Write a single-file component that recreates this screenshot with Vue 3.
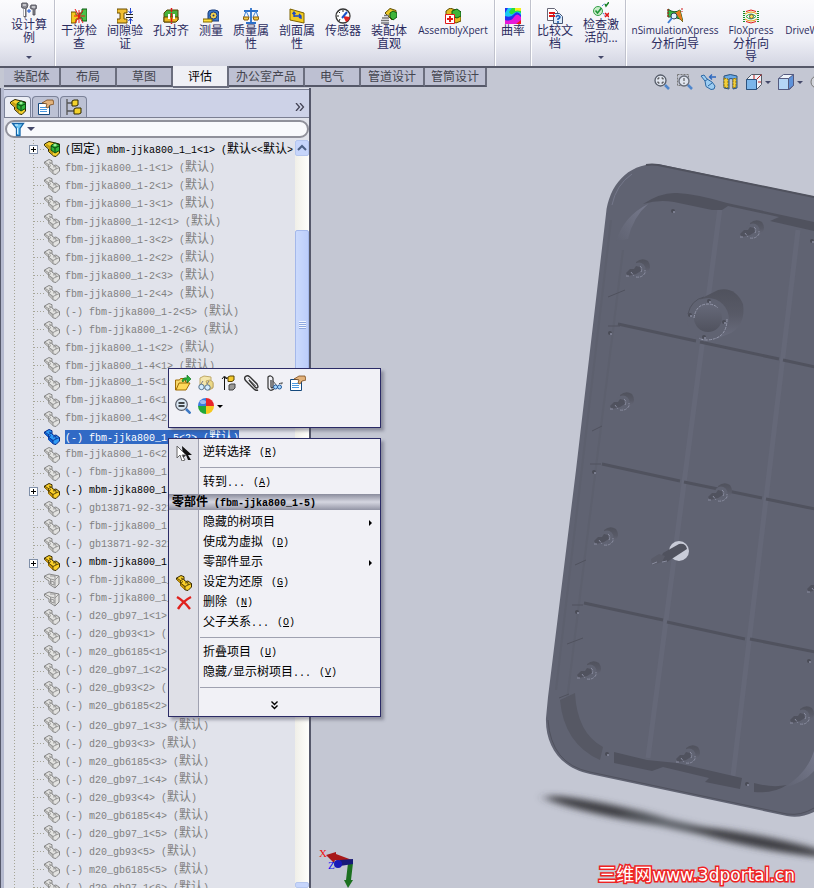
<template>
    <div class="app">
        <!-- 图标定义 -->
        <svg class="defs" aria-hidden="true">
            <symbol id="i-study" viewBox="0 0 16 16">
                <path d="M1 1h5l1 2-1 3H5v9H3V6H1L0 3zM10 3h5l1 2-1 2h-1v6h-2V7h-2L9 5z" fill="#8b8b94" stroke="#45454f" stroke-width=".8" />
                <path d="M2 3h3M3.500 7v7M11 5h3" stroke="#fff" fill="none" />
                <path d="M6 9h4M8 7v4" stroke="#1450d0" />
            </symbol>
            <symbol id="i-interfere" viewBox="0 0 16 16">
                <path d="M0 4h5v3h3v4H5v4H0z" fill="#f2c81e" stroke="#6b5500" />
                <path d="M16 1h-5v4H8v5h3v3h5z" fill="#4cc04a" stroke="#0d5c12" />
                <path d="M4 1l8 14M12 2L4 15M3 8h11M8 2v13" stroke="#f01a1a" />
            </symbol>
            <symbol id="i-clearance" viewBox="0 0 16 16">
                <path d="M0 1h10v4H7v6h3v4H0v-4h3V5H0z" fill="#f0bf34" stroke="#6b4c00" />
                <path d="M9 6.500h7M9 9.500h7" stroke="#222" />
                <path d="M13.500 0v5M13.500 16v-5M11.500 3l2 2.500 2-2.500M11.500 13l2-2.500 2 2.500" stroke="#1b3fd0" fill="none" />
            </symbol>
            <symbol id="i-hole" viewBox="0 0 16 16">
                <path d="M1 5l3-3h11v10l-3 2H1z" fill="#45b13c" stroke="#5a4500" />
                <path d="M1 9h14v3l-2 2H1z" fill="#e8b622" stroke="#5a4500" />
                <path d="M5 6h2v5H5zM10 6h2v5h-2z" fill="#fff" />
                <path d="M8.500 0v16" stroke="#e01818" stroke-width="1.500" stroke-dasharray="4 1" />
            </symbol>
            <symbol id="i-measure" viewBox="0 0 16 16">
                <path d="M5 13V5q0-3 4-3h3q4 0 4 4v7z" fill="#3b78c8" stroke="#173a78" />
                <circle cx="10.500" cy="7.500" r="3.500" fill="#f3d24c" stroke="#173a78" />
                <circle cx="10.500" cy="7.500" r="1" fill="#173a78" />
                <path d="M0 11h9v3H0z" fill="#ffdf3b" stroke="#7d6200" />
            </symbol>
            <symbol id="i-mass" viewBox="0 0 16 16">
                <path d="M8 0v14M1 3h14M3 15h10" stroke="#2b6fc9" stroke-width="1.800" />
                <path d="M3 3l-2 6M3 3l3 6M13 3l-3 6M13 3l2 6" stroke="#3f82d5" fill="none" />
                <path d="M0 9h6l-1 3H1zM10 9h6l-1 3h-4z" fill="#f0cb4b" stroke="#8a5b08" />
            </symbol>
            <symbol id="i-section" viewBox="0 0 16 16">
                <path d="M1 1l14 4v10L1 12z" fill="#f2cb22" stroke="#7d6200" />
                <path d="M5 9V4M3.500 6L5 4l1.500 2M5 8h7M10 6l2 2-2 2M12 8v3" stroke="#1746c8" fill="none" stroke-width="1.300" />
            </symbol>
            <symbol id="i-sensor" viewBox="0 0 16 16">
                <circle cx="8" cy="8" r="7" fill="#fff" stroke="#333" stroke-width="1.300" />
                <path d="M8 8l7 1q-1 4-4 5z" fill="#e32222" />
                <path d="M8 2v2M2 8h2M3.500 3.500L5 5M4 13l1-2" stroke="#222" />
                <path d="M7 10l5-6" stroke="#1c52c8" stroke-width="2" />
            </symbol>
            <symbol id="i-visual" viewBox="0 0 16 16">
                <path d="M4 5l5-4.500 6 2v5l-4 4.500z" fill="#ecc626" stroke="#5a4b00" />
                <path d="M9 5l3-2 4 2v4l-4 3-3-3z" fill="#3fb43a" stroke="#0c5a12" />
                <path d="M3 7.500h5M1 10h7M0 12.500h8M0 15h8" stroke="#777" stroke-width="1.400" />
            </symbol>
            <symbol id="i-expert" viewBox="0 0 16 16">
                <path d="M1 3l4-3 11 4v9l-5 2-10-5z" fill="#e2bb22" stroke="#5a4b00" />
                <path d="M7 3l5-2 4 3v4l-4 2-5-2z" fill="#3fb43a" stroke="#0c5a12" />
                <path d="M.500 6.500h9v9h-9z" fill="#fff" stroke="#e01818" />
                <path d="M5 8v6M2 11h6" stroke="#e01818" stroke-width="2" />
            </symbol>
            <symbol id="i-curve" viewBox="0 0 16 16">
                <path d="M0 0h16v16H0z" fill="#e619d8" />
                <path d="M0 0h16v9Q12 4 9 9T0 12z" fill="#2330f0" />
                <path d="M3 0h13v7Q12 2 9 6T0 8V5z" fill="#18c8f0" />
                <path d="M7 0h9v5q-4-3-7 0T4 4z" fill="#26e03a" />
                <path d="M10 0h6v3q-4-1-6 0z" fill="#f3ef20" />
                <path d="M16 12v4h-5z" fill="#f01818" />
            </symbol>
            <symbol id="i-compare" viewBox="0 0 16 16">
                <path d="M.500.500h7l3 3v9H.500z" fill="#fff" stroke="#667" />
                <path d="M6.500 5.500h6l3 3v7h-9z" fill="#dcebfa" stroke="#457" />
                <path d="M2 5h6M2 8h6" stroke="#e01818" stroke-width="2" />
                <path d="M9 9q2-3 4 0 0 1-2 2v1M11 13v2" stroke="#1c5fb8" stroke-width="1.600" fill="none" />
            </symbol>
            <symbol id="i-check" viewBox="0 0 16 16">
                <circle cx="5" cy="9" r="4.500" fill="#c8ecc8" stroke="#35a04a" />
                <path d="M2.500 8.500l2 2.500 4-5" stroke="#1e9638" stroke-width="1.600" fill="none" />
                <path d="M9 4l3-3M10 11l2 3" stroke="#1c52c8" stroke-dasharray="1 1" />
                <path d="M12 2l1 2 3-4" stroke="#168024" fill="none" stroke-width="1.500" />
                <path d="M12 11l4 4M16 11l-4 4" stroke="#e01818" stroke-width="1.600" />
            </symbol>
            <symbol id="i-simulation" viewBox="0 0 16 16">
                <path d="M1 1q6 5 12 1l3 12-3-3Q6 8 1 9z" fill="#35b540" stroke="#185c20" />
                <path d="M8 5l5-3 3 12-3-3z" fill="#e87a1a" />
                <path d="M15 0v4M1 1v9" stroke="#d01818" stroke-dasharray="2 1" />
                <circle cx="7" cy="8" r="3" fill="#dff0ff" stroke="#345" />
                <path d="M5 10l-4 5" stroke="#3d7fd6" stroke-width="2" />
            </symbol>
            <symbol id="i-flow" viewBox="0 0 16 16">
                <path d="M3 3.500q5-3 10 0M3 13.500q5 3 10 0" stroke="#e01818" fill="none" />
                <path d="M2 6q6-4 12 0M2 11q6 4 12 0" stroke="#e8a410" fill="none" />
                <path d="M3 8.500q5-5 10 0-5 5-10 0" stroke="#2fae3a" fill="none" />
                <path d="M1 3v11M15 3v11" stroke="#168c2a" stroke-dasharray="1 1" stroke-width="2" />
                <circle cx="8.500" cy="8.500" r="2" fill="#ffe14a" stroke="#555" />
            </symbol>

            <symbol id="i-part" viewBox="0 0 16 16">
                <path d="M.500 3L5 .500l3 1.200V5l2 1.500L12 6l3.500 2.500V12L12 15.500 9.500 15 4.500 10.500V8L.500 4.500z" fill="var(--face)" stroke="var(--line)" />
                <path d="M4.500 8l4.500 3v4l-4.500-4zM1 4l3 2v2L1 5z" fill="var(--side)" />
                <path d="M.500 3l4 2.500L8 4M4.500 5.500V8L9 11.500V15M9 11.500L12 10l3.500-1.500M12 10V7.500L9 8M4.500 8L7 6.500M5 3l2 1" stroke="var(--line)" fill="none" stroke-width=".8" />
            </symbol>
            <symbol id="i-block" viewBox="0 0 16 16">
                <path d="M.500 3L5 1l10 2v8l-4 4-6-4V8L.500 5z" fill="var(--face)" stroke="var(--line)" />
                <path d="M.500 3l6 3v5M6.500 6L11 7v8M11 7l4-4M6 3h5v3M7 8l3 1v3l-3-1z" stroke="var(--line)" fill="none" stroke-width=".8" />
            </symbol>
            <symbol id="i-assembly" viewBox="0 0 16 16">
                <path d="M.500 3L5 .500 15.500 3v9L12 15.500 9.500 15 4.500 10.500V8L.500 4.500z" fill="#f6d22e" stroke="#2d2600" />
                <path d="M1 4l4 3v3l4 4v-3L6 8V5L3 3z" fill="#c39a12" />
                <path d="M7 4.500L11 2l4.500 2v5.500L11 12 7 9z" fill="#2fb63a" stroke="#0b4610" />
                <path d="M7 5l4 2 4-2M11 7v4" stroke="#0b4610" fill="none" />
                <path d="M9 4l2-1.500L13 4l-2 1.500z" fill="#a4f09a" />
            </symbol>
            <symbol id="i-property" viewBox="0 0 16 16">
                <path d="M.500 4.500h11v11H.500z" fill="#fff" stroke="#14487c" />
                <path d="M2 8.500h7M2 10.500h7M2 12.500h7" stroke="#4a98e0" />
                <path d="M4 4l5-3 6 0 1 4-4 1-2 3-2-1 1-3z" fill="#e3b37c" stroke="#7a4a1a" stroke-width=".8" />
            </symbol>
            <symbol id="i-config" viewBox="0 0 16 16">
                <path d="M1 0v16M1 4h6M1 12h7" stroke="#555" stroke-width="1.300" />
                <path d="M6 2l2-1h4v5l-2 1H6zM8 10l2-1h5v5l-2 1H8z" fill="#f4d22c" stroke="#2d2600" />
            </symbol>
            <symbol id="i-funnel" viewBox="0 0 16 16">
                <path d="M2.500 2.500h11L10 7.500v7H6.500v-7z" fill="#6cc4f2" stroke="#1565a8" stroke-width="1.300" />
                <path d="M5 4h3M7.500 7v6" stroke="#d8f2ff" />
            </symbol>

            <symbol id="i-open" viewBox="0 0 16 16">
                <path d="M.500 15V5h4l1-1.500h5V7h3z" fill="#f7d76a" stroke="#a06c05" />
                <path d="M1 15l3-7h11l-4 7z" fill="#ffd95a" stroke="#a06c05" />
                <path d="M7 6q1-4 5-3V0l4 4-4 4V5Q9 4 8 7z" fill="#28b03a" stroke="#0e6a1a" stroke-width=".6" />
            </symbol>
            <symbol id="i-hide" viewBox="0 0 16 16">
                <path d="M2 3l4-2 7 1v4l2 2v5l-4 2-9-4z" fill="#f3e6ad" stroke="#bfa968" />
                <path d="M8 6l4-1 3 2v5l-4 3z" fill="#ecd987" stroke="#bfa968" />
                <path d="M3 9l2-3M9 9l2-3" stroke="#778" />
                <circle cx="3.500" cy="12" r="2.700" fill="#d3ecff" stroke="#55708a" />
                <circle cx="9.500" cy="12.500" r="2.700" fill="#d3ecff" stroke="#55708a" />
            </symbol>
            <symbol id="i-rollback" viewBox="0 0 16 16">
                <path d="M3.500 15V2M1 4l2.500-3L6 4M3 3h5" stroke="#111" fill="none" />
                <path d="M7 2l2-1h4v4l-2 1.500H7z" fill="#f4ca2c" stroke="#5a4500" />
                <path d="M8 10l2-1h4v4l-2 2H8z" fill="#9a9a98" stroke="#444" />
            </symbol>
            <symbol id="i-clip" viewBox="0 0 16 16">
                <path d="M5 5l6 7q2 2 3 0 0-1-1-3L6 2Q3-.500 1 2q-1 2 1 4l8 8q2 2 4 1" stroke="#333" fill="none" stroke-width="1.400" />
                <path d="M4 3l8 8" stroke="#888" />
            </symbol>
            <symbol id="i-mate" viewBox="0 0 16 16">
                <path d="M4 5v7q1 2 2 0V3Q4-.500 1 2v11q2 4 6 1" stroke="#333" fill="none" stroke-width="1.200" />
                <path d="M6 6l4 5M12 9l1-1 2 1v-2" stroke="#555" fill="none" />
                <circle cx="8.500" cy="12" r="2" fill="#a8d8ff" stroke="#245a9a" />
                <circle cx="12.500" cy="12" r="2" fill="#a8d8ff" stroke="#245a9a" />
            </symbol>
            <symbol id="i-zoomsel" viewBox="0 0 16 16">
                <circle cx="6.500" cy="6.500" r="5.800" fill="#dbe9f5" stroke="#555a66" stroke-width="1.200" />
                <path d="M3.500 5h6M3.500 8h6" stroke="#111" stroke-width="1.400" />
                <path d="M11 11l4.500 4.500" stroke="#3d78c4" stroke-width="2.500" />
            </symbol>
            <symbol id="i-ball" viewBox="0 0 16 16">
                <path d="M8 8V0a8 8 0 0 0-8 8z" fill="#3c7be0" />
                <path d="M8 8h8a8 8 0 0 0-8-8z" fill="#e8252a" />
                <path d="M8 8v8a8 8 0 0 0 8-8z" fill="#f6c81e" />
                <path d="M8 8H0a8 8 0 0 0 8 8z" fill="#22a838" />
                <ellipse cx="5" cy="4" rx="3" ry="2" fill="#fff" opacity=".5" />
            </symbol>
            <symbol id="i-invert" viewBox="0 0 16 16">
                <path d="M6 1l10 9h-4l3 5h-3l-2-5-3 3z" fill="#111" />
                <path d="M1 1v12l3-3 2 6 3-1-3-5h4z" fill="#fff" stroke="#666" />
            </symbol>
            <symbol id="i-delete" viewBox="0 0 16 16">
                <path d="M1 2q7 4 13 12M15 2Q7 6 2 14" stroke="#e0201c" stroke-width="2.400" fill="none" />
            </symbol>

            <symbol id="i-fit" viewBox="0 0 16 16">
                <circle cx="6.500" cy="6.500" r="5.500" fill="#dfe4ee" stroke="#555b68" stroke-width="1.300" />
                <path d="M4 5.500V4h1.500M7.500 4H9v1.500M9 7.500V9H7.500M5.500 9H4V7.500" stroke="#333" fill="none" />
                <path d="M11 11l4 4" stroke="#4e86cc" stroke-width="2.500" />
            </symbol>
            <symbol id="i-area" viewBox="0 0 16 16">
                <path d="M.500.500h11v11H.500z" fill="none" stroke="#777" stroke-dasharray="2 1" />
                <circle cx="7" cy="7" r="5" fill="#dfe4ee" stroke="#666c78" stroke-width="1.300" />
                <path d="M7 4v3M7 8.500V10" stroke="#444" />
                <path d="M11 11l4 4" stroke="#4e86cc" stroke-width="2.500" />
            </symbol>
            <symbol id="i-previous" viewBox="0 0 16 16">
                <path d="M1 2l3-1 3 4 5 3 3 4-1 3-3 .500-5-3L5 7z" fill="#9dcdf2" stroke="#2c68a4" />
                <path d="M5 7l3-2M8 12l4-3" stroke="#2c68a4" />
                <path d="M16 3h-6M12 .500L9.500 3 12 5.500" stroke="#2c68c0" fill="none" stroke-width="1.300" />
            </symbol>
            <symbol id="i-cut" viewBox="0 0 16 16">
                <path d="M1 2q6-3 13 0v12l-4 1V5Q8 4 6 5v10l-5-1z" fill="#68a8e4" stroke="#2b527e" />
                <path d="M1 4l4 1v9l-4-1zM10 5l3-1v9l-3 1z" fill="#f2cf3b" stroke="#8a6c08" stroke-dasharray="2 1" />
            </symbol>
            <symbol id="i-orient" viewBox="0 0 16 16">
                <path d="M.500 5.500l5-5h10v10l-5 5H.500z" fill="#eef2f8" stroke="#555b68" />
                <path d="M.500 5.500h10v10H.500z" fill="#7cb6ea" stroke="#2b527e" />
                <path d="M10.500 5.500l5-5M8 1v4M12 8h3" stroke="#c02020" />
            </symbol>
            <symbol id="i-display" viewBox="0 0 16 16">
                <path d="M.500 4.500l5-4h10v11l-4 4H.500z" fill="#eef3fa" stroke="#555b80" />
                <path d="M.500 4.500h10v11H.500z" fill="#b5d5f5" stroke="#555b80" />
                <path d="M10.500 4.500l5-4v11l-5 4z" fill="#5e92da" stroke="#555b80" />
            </symbol>
            <symbol id="i-eye" viewBox="0 0 16 16">
                <circle cx="7" cy="8" r="6" fill="#d3d5dc" stroke="#777" />
            </symbol>
        </svg>

        <!-- 功能区 -->
        <header class="ribbon">
            <div v-for="(group, g) in ribbon" :key="g" class="ribbon-group">
                <button v-for="cmd in group" :key="cmd.icon" type="button" class="command"
                    :class="[cmd.size, { compact: cmd.more }]">
                    <svg v-if="cmd.icon !== 'none'" class="icon"><use :href="'#i-' + cmd.icon" /></svg>
                    <span v-else class="icon"></span>
                    <span class="command-label">
                        <span v-for="line in cmd.lines" :key="line" :class="{ latin: /^[A-Za-z]/.test(line) }">{{ line }}</span>
                    </span>
                    <span v-if="cmd.more" class="caret"></span>
                </button>
            </div>
        </header>

        <nav class="tab-row">
            <div class="tabs" role="tablist">
                <button v-for="tab in tabs" :key="tab.name" type="button" role="tab" class="tab"
                    :class="[tab.size, { active: tab.name === activeTab }]" @click="activeTab = tab.name">
                    {{ tab.name }}
                </button>
            </div>
            <div class="view-tools">
                <button v-for="tool in viewTools" :key="tool.icon" type="button" class="tool" :title="tool.title">
                    <svg class="icon"><use :href="'#i-' + tool.icon" /></svg>
                    <span v-if="tool.more" class="caret"></span>
                </button>
            </div>
        </nav>

        <main class="workspace">
            <!-- 左侧：特征树 -->
            <aside class="tree-panel">
                <div class="panel-tabs">
                    <button type="button" class="panel-tab active" title="特征树"><svg class="icon"><use href="#i-assembly" /></svg></button>
                    <button type="button" class="panel-tab" title="属性"><svg class="icon"><use href="#i-property" /></svg></button>
                    <button type="button" class="panel-tab" title="配置"><svg class="icon"><use href="#i-config" /></svg></button>
                    <button type="button" class="expand" title="展开">
                        <svg viewBox="0 0 10 8"><path d="M1 0l3.500 4L1 8M5 0l3.500 4L5 8" fill="none" stroke="#445" stroke-width="1.300" /></svg>
                    </button>
                </div>
                <label class="filter">
                    <svg class="icon"><use href="#i-funnel" /></svg>
                    <span class="caret"></span>
                    <input v-model="filterText" type="text" aria-label="过滤器">
                </label>
                <div class="tree-body">
                    <ul class="tree">
                        <li v-for="(node, i) in nodes" :key="i" class="node" :class="node.state">
                            <span class="twig"><button v-if="node.plus" type="button" class="plus" title="展开"></button></span>
                            <svg class="icon"><use :href="'#i-' + (node.icon || 'part')" /></svg>
                            <MixedText class="node-label" :text="node.text" />
                        </li>
                    </ul>
                    <div class="scrollbar">
                        <button type="button" class="scroll-button" title="向上">
                            <svg viewBox="0 0 10 10"><path d="M1 7l4-4 4 4" fill="none" stroke="#4d6185" stroke-width="2" /></svg>
                        </button>
                        <div class="track-before"></div>
                        <div class="thumb"><i></i></div>
                        <div class="track-after"></div>
                        <button type="button" class="scroll-button cut" title="向下"></button>
                    </div>
                </div>
            </aside>

            <!-- 右侧：图形区域 -->
            <section class="viewport">
                <svg class="scene" viewBox="311 88 503 800" preserveAspectRatio="xMinYMin slice">
                    <defs>
                        <filter id="soft" x="-30%" y="-300%" width="160%" height="700%">
                            <feGaussianBlur stdDeviation="6 3" />
                        </filter>
                        <linearGradient id="bore" x1="0" y1="0" x2="0" y2="1">
                            <stop offset="0" stop-color="#666979" />
                            <stop offset="1" stop-color="#50525e" />
                        </linearGradient>
                        <linearGradient id="drum" x1="0" y1="0" x2="0" y2="1">
                            <stop offset="0" stop-color="#50525d" />
                            <stop offset=".5" stop-color="#585a67" />
                            <stop offset="1" stop-color="#6a6d7e" />
                        </linearGradient>
                        <linearGradient id="fillet" x1="0" y1="1" x2="1" y2="0">
                            <stop offset="0" stop-color="#5f6271" />
                            <stop offset="1" stop-color="#76798c" />
                        </linearGradient>
                        <g id="boss">
                            <path d="M-2-7Q4-12 10-8q4 6 0 11L0 7z" fill="url(#drum)" />
                            <circle cx="1" cy="0" r="6.500" fill="#606372" />
                            <path d="M-12 4l4-4 4 0 2-3 4 1 1 4-5 3-8 2z" fill="#50525e" />
                            <path d="M-12 7h4M-7 3l3 4M-2 8q6 1 9-4V1M2-3q3 2 1 6" stroke="#8a8da0" fill="none" stroke-dasharray="3 1" />
                        </g>
                    </defs>

                    <g filter="url(#soft)">
                        <ellipse cx="612" cy="811" rx="68" ry="6" transform="rotate(12 612 811)" fill="#3c3e42" />
                        <ellipse cx="680" cy="826" rx="60" ry="4" transform="rotate(12 680 826)" fill="#55585e" />
                        <ellipse cx="760" cy="842" rx="72" ry="6" transform="rotate(11 760 842)" fill="#3c3e42" />
                    </g>

                    <path d="M606 214C609 185 628 163 658 164L816 197V811C806 816 797 818 787 816L590 774C560 768 545 745 546 718L548 697 576 470z" fill="#606372" />
                    <path d="M646 165q6-1 12 0l156 32" fill="none" stroke="#50525e" stroke-width="2" />
                    <path d="M612 205q4-20 20-31" fill="none" stroke="#74778a" />
                    <path d="M548 720q3 44 42 52l197 42q14 2 27-6" fill="none" stroke="#50525e" />
                    <path d="M611 220L556 690M623 250L567 700" fill="none" stroke="#5d606e" stroke-width="2" />
                    <path d="M720 208L648 758M798 230L733 776" fill="none" stroke="#656878" stroke-width="5" />

                    <path d="M643 204q18-12 34-11 20 1 50 10l87 19v9l-44-10 9-4-51-11-6 4h-10l-38-8q-15-3-31 2z" fill="#50525e" />
                    <path d="M648 204q-24 12-32 37l12-2q5-22 20-35z" fill="url(#fillet)" />
                    <path d="M560 700l15-7q2 40 28 54l-3 13q-36-16-40-60z" fill="#565864" />
                    <path d="M614 752l33 8 30 3 65 15-2 11-35-7 4-4-46-11-11 4-38-8zM754 783q18 5 33 2-14 9-33 7z" fill="#50525e" />
                    <path d="M783 788q24-14 31-37v20q-10 12-31 17z" fill="url(#fillet)" />

                    <path d="M618 324l78 17M700 342l79 17M783 360l32 7M602 464l78 17M684 482l78 16M766 499l49 10M584 603l79 17M667 622l78 17M750 639l65 13" fill="none" stroke="#50525e" stroke-width="3" />
                    <path d="M608 297l17-7M592 431l10-5M575 565l11-5M567 644l16-6M559 698l10-4M608 326h12M590 464h11M572 605h11" fill="none" stroke="#50525e" />

                    <path d="M700 299l18-9q17-4 25 14 3 20-12 29l-15 6z" fill="url(#drum)" />
                    <circle cx="708" cy="319" r="21" fill="#606372" />
                    <circle cx="708" cy="318" r="14" fill="url(#bore)" />
                    <path d="M694 318q2-14 14-14 6 0 10 4M727 319q0 20-20 21-5 0-8-2" fill="none" stroke="#9497aa" stroke-dasharray="3 1" />
                    <path d="M688 314q3-14 16-17" fill="none" stroke="#50525e" />

                    <circle cx="679" cy="551" r="10" fill="#c9ccd8" />
                    <path d="M663 553l16-9q7-1 8 5l-20 13-8 0z" fill="#50525e" />
                    <path d="M651 559l8-5 6 2-3 6-10 3z" fill="#5a5c69" />
                    <path d="M652 564l5-2M662 562l5-1" stroke="#8a8da0" />

                    <use v-for="(b, i) in bosses" :key="'b' + i" href="#boss" :x="b[0]" :y="b[1]" />
                    <g v-for="(s, i) in screws" :key="'s' + i">
                        <circle :cx="s[0]" :cy="s[1]" r="2" fill="#4a4c57" />
                        <circle :cx="s[0] + 1" :cy="s[1] + 1" r="1" fill="#8a8da0" />
                    </g>

                    <!-- 坐标轴 -->
                    <path d="M348 863h5l-2 17h2l-5 8-4-8h2z" fill="#1c7020" />
                    <path d="M352 860l-16-6v-2l-10 3 8 8 1-3 16 4z" fill="#a81818" />
                    <path d="M353 859l-13 1v6l13-2z" fill="#161a78" />
                    <circle cx="338" cy="864" r="4" fill="#1818b8" />
                    <text x="319" y="857" class="axis axis-x">X</text>
                    <text x="328" y="869" class="axis axis-z">Z</text>
                </svg>
                <div class="watermark"><span>三维网</span>www.3dportal.cn</div>
            </section>
        </main>

        <!-- 关联工具栏 -->
        <div class="popup quick-tools">
            <button v-for="tool in quickTools" :key="tool.icon" type="button" class="quick" :title="tool.title">
                <svg class="icon"><use :href="'#i-' + tool.icon" /></svg>
                <span v-if="tool.more" class="caret dark"></span>
            </button>
        </div>

        <!-- 右键菜单 -->
        <div class="popup menu" role="menu">
            <template v-for="(item, i) in menu" :key="i">
                <div v-if="item.type === 'line'" class="menu-line"></div>
                <div v-else-if="item.type === 'title'" class="menu-title"><MixedText :text="item.text" /></div>
                <button v-else-if="item.type === 'more'" type="button" class="menu-more" title="更多">
                    <svg viewBox="0 0 7 9"><path d="M.500.500l3 3 3-3M.500 4.500l3 3 3-3" fill="none" stroke="#000" stroke-width="1.400" /></svg>
                </button>
                <button v-else type="button" role="menuitem" class="menu-item">
                    <span class="menu-icon">
                        <svg v-if="item.icon" class="icon"><use :href="'#i-' + item.icon" /></svg>
                    </span>
                    <MixedText :text="item.text" />
                    <span v-if="item.key" class="mnemonic"> (<u>{{ item.key }}</u>)</span>
                    <span v-if="item.sub" class="submenu"></span>
                </button>
            </template>
        </div>
    </div>
</template>

<script setup>
import { ref, h } from 'vue'

// 中文与等宽西文使用不同字号
const MixedText = (props) => h('span', { class: 'mixed' },
    props.text.match(/[\u4e00-\u9fff]+|[^\u4e00-\u9fff]+/g).map(run =>
        /[\u4e00-\u9fff]/.test(run) ? h('span', { class: 'han' }, run) : run))
MixedText.props = ['text']

const activeTab = ref('评估')
const filterText = ref('')

// 功能区命令
const ribbon = [
    [{ icon: 'study', lines: ['设计算', '例'], size: 'w50', more: true }],
    [
        { icon: 'interfere', lines: ['干涉检', '查'] },
        { icon: 'clearance', lines: ['间隙验', '证'] },
        { icon: 'hole', lines: ['孔对齐'] },
        { icon: 'measure', lines: ['测量'], size: 'w34' },
        { icon: 'mass', lines: ['质量属', '性'] },
        { icon: 'section', lines: ['剖面属', '性'] },
        { icon: 'sensor', lines: ['传感器'] },
        { icon: 'visual', lines: ['装配体', '直观'] },
        { icon: 'expert', lines: ['AssemblyXpert'], size: 'w82' }
    ],
    [{ icon: 'curve', lines: ['曲率'], size: 'w34' }],
    [
        { icon: 'compare', lines: ['比较文', '档'] },
        { icon: 'check', lines: ['检查激', '活的...'], more: true }
    ],
    [
        { icon: 'simulation', lines: ['nSimulationXpress', '分析向导'], size: 'w96' },
        { icon: 'flow', lines: ['FloXpress', '分析向', '导'], size: 'w56' },
        { icon: 'none', lines: ['DriveW'], size: 'w46' }
    ]
]

const tabs = [
    { name: '装配体', size: 't57' },
    { name: '布局', size: 't56' },
    { name: '草图', size: 't56' },
    { name: '评估', size: 't56' },
    { name: '办公室产品', size: 't76' },
    { name: '电气', size: 't56' },
    { name: '管道设计', size: 't64' },
    { name: '管筒设计', size: 't62' }
]

const viewTools = [
    { icon: 'fit', title: '整屏显示全图' },
    { icon: 'area', title: '局部放大' },
    { icon: 'previous', title: '上一视图' },
    { icon: 'cut', title: '剖面视图' },
    { icon: 'orient', title: '视图定向', more: true },
    { icon: 'display', title: '显示样式', more: true },
    { icon: 'eye', title: '隐藏/显示项目' }
]

const quickTools = [
    { icon: 'open', title: '打开零件' },
    { icon: 'hide', title: '隐藏零部件' },
    { icon: 'rollback', title: '压缩' },
    { icon: 'clip', title: '配合' },
    { icon: 'mate', title: '查看配合' },
    { icon: 'property', title: '零部件属性' },
    { icon: 'zoomsel', title: '放大所选范围' },
    { icon: 'ball', title: '外观', more: true }
]

const nodes = [
    { text: '(固定) mbm-jjka800_1_1<1> (默认<<默认>', icon: 'assembly', plus: true, state: 'resolved' },
    ...['1<1>', '2<1>', '3<1>', '12<1>', '3<2>', '2<2>', '2<3>', '2<4>'].map(n => ({ text: `fbm-jjka800_1-${n} (默认)` })),
    { text: '(-) fbm-jjka800_1-2<5> (默认)' },
    { text: '(-) fbm-jjka800_1-2<6> (默认)' },
    { text: 'fbm-jjka800_1-1<2> (默认)' },
    { text: 'fbm-jjka800_1-4<1> (默认)' },
    { text: 'fbm-jjka800_1-5<1' },
    { text: 'fbm-jjka800_1-6<1' },
    { text: 'fbm-jjka800_1-4<2' },
    { text: '(-) fbm-jjka800_1-5<2> (默认)', state: 'selected' },
    { text: 'fbm-jjka800_1-6<2' },
    { text: '(-) fbm-jjka800_1-' },
    { text: '(-) mbm-jjka800_1-', plus: true, state: 'resolved' },
    { text: '(-) gb13871-92-32x' },
    { text: '(-) fbm-jjka800_1-' },
    { text: '(-) gb13871-92-32x' },
    { text: '(-) mbm-jjka800_1-', plus: true, state: 'resolved' },
    { text: '(-) fbm-jjka800_1_', icon: 'block' },
    { text: '(-) fbm-jjka800_1_', icon: 'block' },
    ...[1, 2].flatMap(n => [
        { text: `(-) d20_gb97_1<${n}>` },
        { text: `(-) d20_gb93<${n}> (` },
        { text: `(-) m20_gb6185<${n}>` }
    ]),
    ...[3, 4, 5].flatMap(n => [
        { text: `(-) d20_gb97_1<${n}> (默认)` },
        { text: `(-) d20_gb93<${n}> (默认)` },
        { text: `(-) m20_gb6185<${n}> (默认)` }
    ]),
    { text: '(-) d20_gb97_1<6> (默认)' }
]

const menu = [
    { text: '逆转选择', key: 'R', icon: 'invert' },
    { type: 'line' },
    { text: '转到...', key: 'A' },
    { type: 'title', text: '零部件 (fbm-jjka800_1-5)' },
    { text: '隐藏的树项目', sub: true },
    { text: '使成为虚拟', key: 'D' },
    { text: '零部件显示', sub: true },
    { text: '设定为还原', key: 'G', icon: 'part' },
    { text: '删除', key: 'N', icon: 'delete' },
    { text: '父子关系...', key: 'O' },
    { type: 'line' },
    { text: '折叠项目', key: 'U' },
    { text: '隐藏/显示树项目...', key: 'V' },
    { type: 'line' },
    { type: 'more' }
]

// 模型上的凸台与螺钉
const bosses = [[752, 230], [638, 269], [622, 402], [720, 493], [606, 537], [589, 671], [688, 755], [802, 716], [819, 585]]
const screws = [[673, 211], [610, 333], [594, 472], [577, 612], [607, 754], [747, 784], [809, 661], [812, 241], [690, 315], [709, 301], [724, 322], [704, 337]]
</script>

<style>
body {
    margin: 0;
}
</style>

<style scoped>
.app {
    position: relative;
    display: flex;
    flex-direction: column;
    height: 100vh;
    overflow: hidden;
    background: #c4c7d3;
    font-family: "Open Sans", "Noto Sans CJK SC", sans-serif;
    font-size: 12px;
    color: #000;
}

.defs {
    position: absolute;
    width: 0;
    height: 0;
}

button {
    margin: 0;
    padding: 0;
    border: 0;
    background: none;
    font: inherit;
    color: inherit;
}

.icon {
    display: block;
    width: 16px;
    height: 16px;
    flex: none;
}

.caret {
    flex: none;
    width: 0;
    height: 0;
    border: 3px solid transparent;
    border-top-color: #44496a;
    border-bottom: 0;
}

.caret.dark {
    border-top-color: #000;
}

.ribbon {
    display: flex;
    flex: none;
    height: 66px;
    padding-left: 4px;
    overflow: hidden;
    border-bottom: 2px solid #555868;
    background: linear-gradient(#fbfbfd, #eeeff6 60%, #d3d5e2);
}

.ribbon-group {
    display: flex;
    flex: none;
    border-right: 1px solid #c0c2cd;
    border-left: 1px solid #fff;
}

.ribbon-group:first-child {
    border-left: 0;
}

.ribbon-group:nth-child(4) {
    padding-right: 1px;
}

.ribbon-group:last-child {
    border-right: 0;
}

.command {
    display: flex;
    flex-direction: column;
    align-items: center;
    width: 46px;
    height: 64px;
    padding-top: 8px;
    color: #2b2b5e;
}

.command.compact {
    padding-top: 2px;
}

.command-label {
    display: flex;
    flex-direction: column;
    align-items: center;
    line-height: 13px;
    white-space: nowrap;
}

.latin {
    font-size: 10px;
}

.command .caret {
    margin-top: 12px;
}

.w34 {
    width: 34px;
}

.w50 {
    width: 50px;
}

.w46 {
    width: 46px;
}

.w56 {
    width: 56px;
}

.w82 {
    width: 82px;
}

.w96 {
    width: 96px;
}

.tab-row {
    display: flex;
    flex: none;
    justify-content: space-between;
    height: 20px;
    padding-left: 4px;
}

.tabs {
    display: flex;
}

.tab {
    box-sizing: border-box;
    height: 19px;
    border-right: 2px solid #6b6e7e;
    border-bottom: 2px solid #555868;
    background: #bdc0d2;
    line-height: 16px;
    color: #44454f;
    white-space: nowrap;
}

.tab.active {
    height: 22px;
    margin-top: -2px;
    padding-top: 2px;
    border-bottom-color: #6b6e7e;
    background: #eff0f5;
    color: #000;
}

.t56 {
    width: 56px;
}

.t57 {
    width: 57px;
}

.t62 {
    width: 62px;
}

.t64 {
    width: 64px;
}

.t76 {
    width: 76px;
}

.view-tools {
    display: flex;
    gap: 7px;
    align-items: flex-start;
    width: 160px;
    padding-top: 6px;
}

.tool {
    display: flex;
    align-items: center;
    gap: 3px;
}

.workspace {
    display: flex;
    flex: 1;
    min-height: 0;
}

.tree-panel {
    box-sizing: border-box;
    display: flex;
    flex: none;
    flex-direction: column;
    width: 311px;
    border-right: 2px solid #55586a;
    border-left: 1px solid #55586a;
    box-shadow: inset 3px 0 #b4b9ce;
    padding-left: 3px;
    background: #e1e3eb;
}

.panel-tabs {
    display: flex;
    align-items: flex-end;
    height: 25px;
    margin-top: 1px;
    padding-top: 2px;
    border-top: 1px solid #7b7f92;
    border-bottom: 1px solid #7b7f92;
    background: #cdd2e7;
}

.panel-tab {
    box-sizing: border-box;
    display: flex;
    align-items: center;
    justify-content: center;
    width: 27px;
    height: 21px;
    margin-right: 1px;
    border: 1px solid #7b8299;
    border-bottom: 0;
    border-radius: 4px 4px 0 0;
    background: #bcc1d4;
}

.panel-tab.active {
    background: #eceef5;
}

.expand {
    width: 10px;
    margin: 0 4px 6px auto;
}

.expand svg {
    display: block;
}

.filter {
    display: flex;
    align-items: center;
    box-sizing: border-box;
    height: 18px;
    margin: 2px 0 2px 1px;
    padding-left: 3px;
    border: 2px solid #8f909a;
    border-radius: 9px;
    background: #f8f9fc;
}

.filter .caret {
    border-width: 4px;
    border-bottom: 0;
    margin-left: 1px;
}

.filter input {
    flex: 1;
    min-width: 0;
    height: 12px;
    padding: 0 6px;
    border: 0;
    outline: 0;
    background: none;
    font: inherit;
}

.tree-body {
    display: flex;
    flex: 1;
    min-height: 0;
}

.tree {
    flex: 1;
    min-width: 0;
    margin: 0;
    padding: 0;
    overflow: hidden;
    list-style: none;
    background:
        repeating-linear-gradient(#a5a596 0 1px, transparent 1px 3px) 10px 0 / 1px 100% no-repeat,
        repeating-linear-gradient(#a5a596 0 1px, transparent 1px 3px) 29px 0 / 1px 100% no-repeat;
}

.node {
    --face: #e2e2e0;
    --side: #b9b9b7;
    --line: #858585;
    display: flex;
    align-items: center;
    height: 18px;
    padding-left: 25px;
    color: #808080;
}

.node.resolved {
    --face: #fbd02a;
    --side: #c79408;
    --line: #3a2c00;
    color: #000;
}

.node.selected {
    --face: #2f9bf5;
    --side: #0f5fd0;
    --line: #062a8c;
    color: #fff;
}

.twig {
    display: flex;
    align-items: center;
    width: 15px;
    height: 9px;
    background: repeating-linear-gradient(90deg, #a5a596 0 1px, transparent 1px 3px) 5px 4px / 10px 1px no-repeat;
}

.plus {
    width: 9px;
    height: 9px;
    border: 1px solid #7f8fa8;
    background:
        linear-gradient(#000, #000) 1px 3px / 5px 1px no-repeat,
        linear-gradient(#000, #000) 3px 1px / 1px 5px no-repeat,
        #fff;
}

.mixed,
.mnemonic {
    font-family: "Liberation Mono", monospace;
    font-size: 10px;
    line-height: 14px;
    white-space: pre;
}

.mixed :deep(.han) {
    font-family: "Noto Sans CJK SC", sans-serif;
    font-size: 12px;
    line-height: 12px;
}

.node-label {
    flex: none;
    height: 14px;
    margin-left: 5px;
}

.selected .node-label {
    background: #316ac5;
}

.scrollbar {
    display: flex;
    flex: none;
    flex-direction: column;
    width: 14px;
    background: linear-gradient(90deg, #f0efe8, #fefefc);
}

.scroll-button {
    flex: none;
    height: 16px;
    border: 1px solid #b5c6ee;
    border-radius: 2px;
    background: #c6d5fb;
}

.scroll-button svg {
    display: block;
    width: 10px;
    margin: auto;
}

.scroll-button.cut {
    height: 6px;
}

.track-before {
    flex: 74;
}

.thumb {
    display: flex;
    flex: 188;
    align-items: center;
    justify-content: center;
    border: 1px solid #a4b8ea;
    border-radius: 2px;
    background: linear-gradient(90deg, #cbdafc, #bccdfa);
}

.thumb i {
    width: 7px;
    height: 8px;
    background: repeating-linear-gradient(#f2f6ff 0 1px, #8fa8e0 1px 2px);
}

.track-after {
    flex: 464;
}

.viewport {
    position: relative;
    flex: 1;
    min-width: 0;
    overflow: hidden;
}

.scene {
    display: block;
    width: 100%;
    height: 100%;
}

.axis {
    font-family: "Liberation Serif", serif;
    font-size: 11px;
}

.axis-x {
    fill: #f01010;
}

.axis-z {
    fill: #1010f0;
}

.watermark {
    position: absolute;
    right: 19px;
    bottom: 3px;
    font-family: "DejaVu Sans", "Noto Sans CJK SC", sans-serif;
    font-size: 17px;
    line-height: 20px;
    color: #fff;
    paint-order: stroke fill;
    -webkit-text-stroke: 3px #ee2222;
    white-space: nowrap;
}

.watermark span {
    font-size: 18px;
}

.popup {
    position: absolute;
    left: 168px;
    box-sizing: border-box;
    width: 213px;
    border: 1px solid #2b2b66;
    background: #f1f1f6;
    box-shadow: 3px 3px 3px rgba(60, 60, 80, 0.4);
}

.quick-tools {
    top: 368px;
    display: flex;
    flex-wrap: wrap;
    align-content: flex-start;
    gap: 7px;
    height: 60px;
    padding: 6px 60px 0 6px;
}

.quick {
    display: flex;
    align-items: center;
    gap: 3px;
    height: 16px;
}

.menu {
    top: 438px;
    padding-top: 3px;
    background: linear-gradient(90deg, #dfe0e7 29px, #9fa1b0 29px 30px, #f1f1f6 30px);
}

.menu-item {
    display: flex;
    align-items: center;
    width: 100%;
    height: 20px;
    padding-top: 1px;
}

.menu-icon {
    --face: #fbd02a;
    --side: #c79408;
    --line: #3a2c00;
    flex: none;
    width: 27px;
    padding-left: 7px;
}

.submenu {
    margin: 0 8px 0 auto;
    border: 3px solid transparent;
    border-left-color: #000;
    border-right: 0;
}

.mnemonic {
    margin-left: 2px;
}

.menu-line {
    height: 1px;
    margin: 5px 0 4px 31px;
    background: #9fa1b0;
}

.menu-title {
    height: 16px;
    margin: 2px 0;
    padding-left: 3px;
    background: linear-gradient(#8a8c9c, #d5d6e0 50%, #9294a4);
    font-weight: bold;
    line-height: 16px;
}

.menu-more {
    display: block;
    width: 100%;
    height: 24px;
    padding-top: 3px;
}

.menu-more svg {
    display: block;
    width: 7px;
    margin: auto;
}
</style>
